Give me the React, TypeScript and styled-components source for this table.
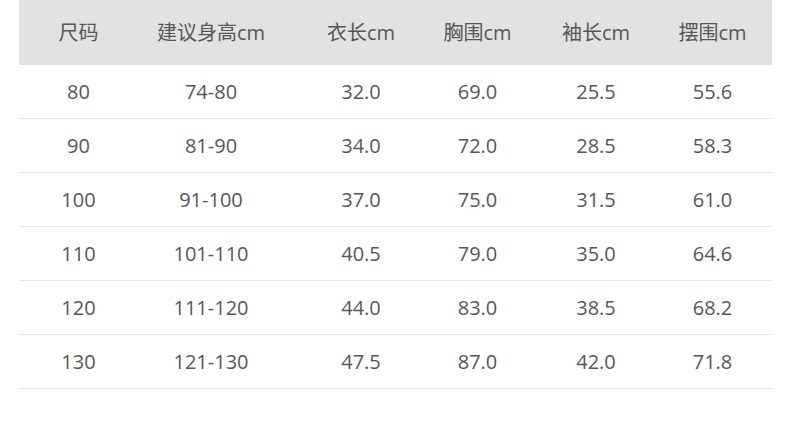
import React from "react";
import styled, { createGlobalStyle } from "styled-components";

const GlobalStyle = createGlobalStyle`
  html, body {
    margin: 0;
    padding: 0;
    background: #ffffff;
  }
  body {
    font-family: "Open Sans", "Noto Sans CJK SC", sans-serif;
  }
`;

const Page = styled.div`
  width: 790px;
  height: 431px;
  padding-left: 19px;
  box-sizing: border-box;
  background: #ffffff;
`;

const Table = styled.div`
  width: 753px;
`;

const Row = styled.div<{ head?: boolean }>`
  display: grid;
  grid-template-columns: 119px 146px 154px 79px 158px 75px 1fr;
  align-items: center;
  height: ${(p) => (p.head ? "65px" : "53px")};
  background: ${(p) => (p.head ? "#e2e2e2" : "transparent")};
  border-bottom: ${(p) => (p.head ? "none" : "1px solid #e6e6e6")};
`;

const Cell = styled.div`
  text-align: center;
  font-size: 20px;
  line-height: 1;
  color: #575757;
  white-space: nowrap;
`;

const headers = ["尺码", "建议身高cm", "衣长cm", "胸围cm", "袖长cm", "摆围cm"];

const rows = [
  ["80", "74-80", "32.0", "69.0", "25.5", "55.6"],
  ["90", "81-90", "34.0", "72.0", "28.5", "58.3"],
  ["100", "91-100", "37.0", "75.0", "31.5", "61.0"],
  ["110", "101-110", "40.5", "79.0", "35.0", "64.6"],
  ["120", "111-120", "44.0", "83.0", "38.5", "68.2"],
  ["130", "121-130", "47.5", "87.0", "42.0", "71.8"],
];

export default function App() {
  return (
    <Page>
      <GlobalStyle />
      <Table>
        <Row head>
          {headers.map((h) => (
            <Cell key={h}>{h}</Cell>
          ))}
        </Row>
        {rows.map((r) => (
          <Row key={r[0]}>
            {r.map((v, i) => (
              <Cell key={i}>{v}</Cell>
            ))}
          </Row>
        ))}
      </Table>
    </Page>
  );
}
